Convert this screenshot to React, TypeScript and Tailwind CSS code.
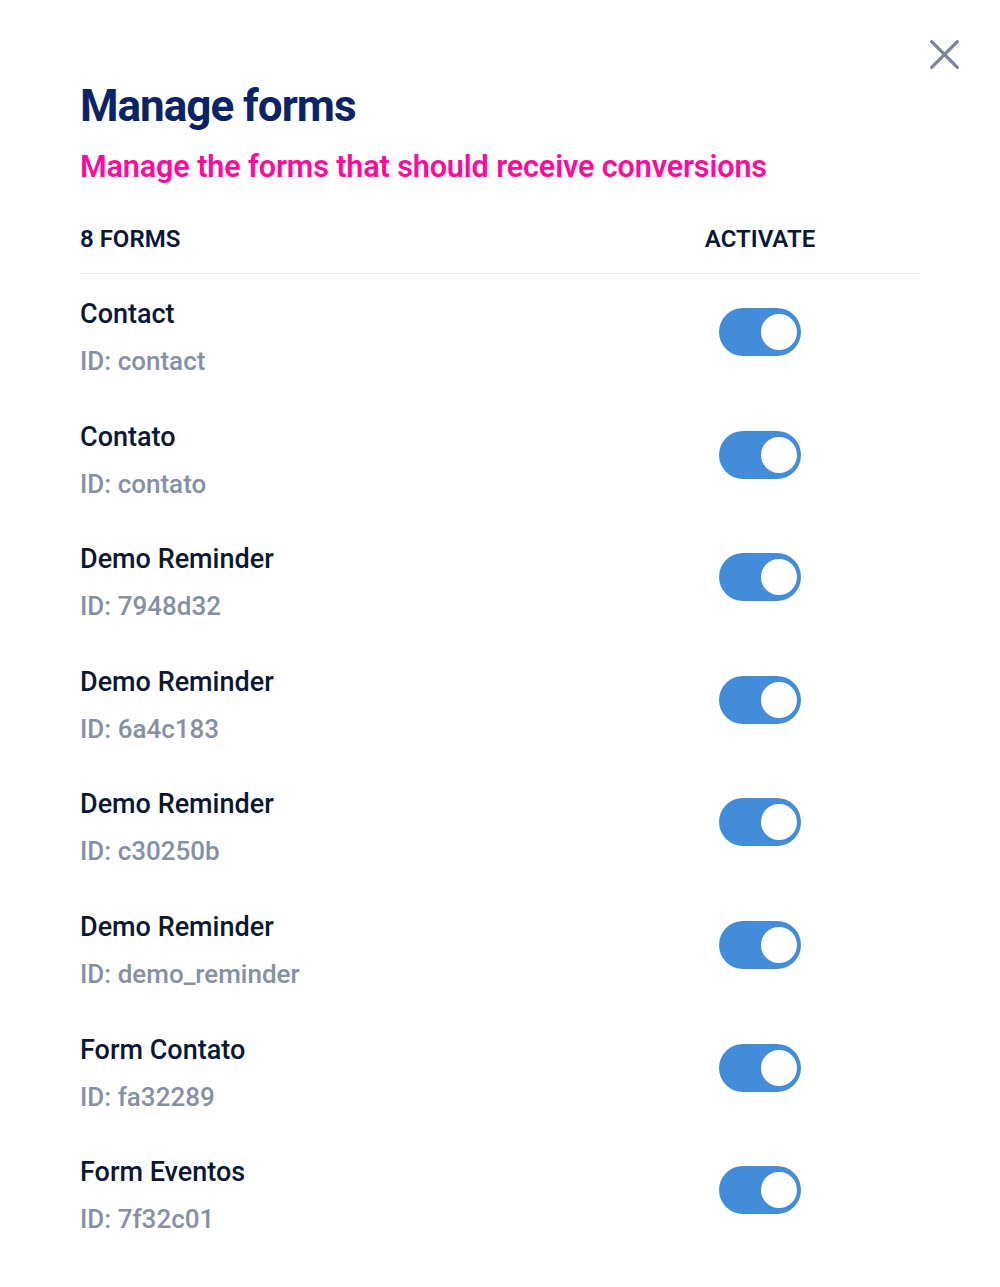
const forms = [
    { name: 'Contact', id: 'contact' },
    { name: 'Contato', id: 'contato' },
    { name: 'Demo Reminder', id: '7948d32' },
    { name: 'Demo Reminder', id: '6a4c183' },
    { name: 'Demo Reminder', id: 'c30250b' },
    { name: 'Demo Reminder', id: 'demo_reminder' },
    { name: 'Form Contato', id: 'fa32289' },
    { name: 'Form Eventos', id: '7f32c01' },
]

function Toggle() {
    return (
        <div className="w-[82px] h-[48px] rounded-full bg-[#438cd9] flex items-center justify-end pr-[4px]">
            <div className="w-[36px] h-[36px] rounded-full bg-white" />
        </div>
    )
}

export default function App() {
    return (
        <div className="min-h-[1287px] bg-white font-['Roboto',sans-serif]">
            {/* Close */}
            <div className="flex justify-end pt-[40px] pr-[41px]">
                <button className="text-[#7d8597]">
                    <svg width="29" height="29" viewBox="0 0 29 29" fill="none" stroke="currentColor" strokeWidth="3.3" strokeLinecap="round">
                        <path d="M1.7 1.7L27.3 27.3M27.3 1.7L1.7 27.3" />
                    </svg>
                </button>
            </div>

            <div className="px-[80px]">
                <h1 className="mt-[9px] text-[44px] leading-[56px] font-bold tracking-[-1px] text-[#0b2466]">
                    Manage forms
                </h1>
                <p className="mt-[13px] text-[30.5px] leading-[40px] font-semibold tracking-[-0.1px] text-[#ff0a9c]">
                    Manage the forms that should receive conversions
                </p>

                {/* Header */}
                <div className="mt-[33px] flex items-center h-[38px] border-b border-[#e8e8eb] box-content pb-[15px]">
                    <div className="flex-1 text-[24px] font-semibold text-[#0c1733]">8 FORMS</div>
                    <div className="w-[200px] mr-[60px] text-center text-[24px] font-semibold text-[#0c1733]">
                        ACTIVATE
                    </div>
                </div>

                {/* Rows */}
                <div>
                    {forms.map((form, i) => (
                        <div key={i} className="flex items-start pt-[20px] pb-[17.6px]">
                            <div className="flex-1">
                                <div className="text-[27px] leading-[40px] font-medium text-[#0c1733]">
                                    {form.name}
                                </div>
                                <div className="mt-[9px] text-[26px] leading-[36px] font-medium text-[#8790a3]">
                                    ID: {form.id}
                                </div>
                            </div>
                            <div className="w-[200px] mr-[60px] flex justify-center mt-[14px]">
                                <Toggle />
                            </div>
                        </div>
                    ))}
                </div>
            </div>
        </div>
    )
}
